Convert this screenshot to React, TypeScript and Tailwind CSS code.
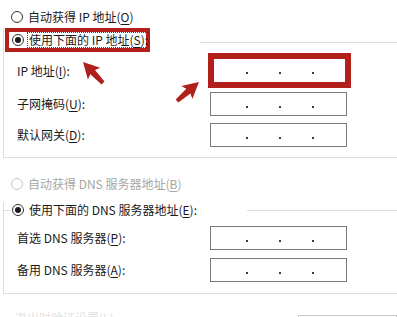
import type { ReactNode } from 'react';

function Radio({ checked, disabled }: { checked?: boolean; disabled?: boolean }) {
  return (
    <span
      className={`w-[12px] h-[12px] rounded-full border bg-white flex items-center justify-center shrink-0 ${
        disabled ? 'border-[#c4c4c4]' : 'border-[#333333]'
      }`}
    >
      {checked && <span className="w-[6px] h-[6px] rounded-full bg-[#1a1a1a]" />}
    </span>
  );
}

function Key({ children }: { children: ReactNode }) {
  return <u className="underline underline-offset-[2px] decoration-1">{children}</u>;
}

function Dots({ pad }: { pad: string }) {
  return (
    <div className={`flex items-center gap-[31px] pt-[5px] ${pad}`}>
      <span className="w-[2px] h-[2px] bg-[#3a3a3a]" />
      <span className="w-[2px] h-[2px] bg-[#3a3a3a]" />
      <span className="w-[2px] h-[2px] bg-[#3a3a3a]" />
    </div>
  );
}

function IpBox() {
  return (
    <div className="w-[137px] h-[24px] border border-[#7a7a7a] bg-white flex">
      <Dots pad="pl-[35px]" />
    </div>
  );
}

function Arrow({ x, y, angle }: { x: number; y: number; angle: number }) {
  // tail at (x, y), pointing along angle (deg)
  return (
    <polygon
      transform={`translate(${x} ${y}) rotate(${angle})`}
      points="0,-2 15,-3.2 13,-8.5 29,0 13,8.5 15,3.2 0,2"
      fill="#af1f1b"
    />
  );
}

export default function App() {
  return (
    <div className="relative w-[397px] h-[317px] overflow-hidden bg-white text-[12px] leading-none text-[#1a1a1a] font-['Noto_Sans_CJK_SC',sans-serif]">
      {/* 自动获得 IP */}
      <div className="flex items-center h-[13px] mt-[10px] pl-[11px]">
        <Radio />
        <span className="ml-[5px]">
          自动获得 IP 地址(<Key>O</Key>)
        </span>
      </div>

      {/* IP group */}
      <div className="mt-[19px] ml-[3px] border-l border-b border-[#dcdcdc] pb-[10px]">
        <div className="-mt-[14px] h-[24px] flex">
          <div className="ml-[1px] w-[145px] h-[24px] border-[4px] border-[#b3201b] bg-white flex items-center pl-[3px]">
            <Radio checked />
            <span className="ml-[3px] h-[16px] px-[1px] border border-dotted border-[#444] flex items-center whitespace-nowrap">
              使用下面的 IP 地址(<Key>S</Key>):
            </span>
          </div>
          <div className="ml-auto w-[197px] mt-[14px] border-t border-[#dcdcdc] self-start" />
        </div>

        <div className="mt-[1px] h-[35px] flex items-center">
          <div className="w-[204px] pl-[13px]">
            IP 地址(<Key>I</Key>):
          </div>
          <div className="w-[143px] h-[35px] border-[6px] border-[#b3201b] bg-white flex">
            <Dots pad="pl-[32px]" />
          </div>
        </div>

        <div className="mt-[4px] h-[24px] flex items-center">
          <div className="w-[206px] pl-[13px]">
            子网掩码(<Key>U</Key>):
          </div>
          <IpBox />
        </div>

        <div className="mt-[7px] h-[24px] flex items-center">
          <div className="w-[206px] pl-[13px]">
            默认网关(<Key>D</Key>):
          </div>
          <IpBox />
        </div>
      </div>

      {/* 自动获得 DNS (disabled) */}
      <div className="flex items-center h-[13px] mt-[19px] pl-[11px] text-[#a6a6a6]">
        <Radio disabled />
        <span className="ml-[5px]">
          自动获得 DNS 服务器地址(<Key>B</Key>)
        </span>
      </div>

      {/* DNS group */}
      <div className="mt-[20px] ml-[3px] border-l border-b border-[#dcdcdc] pb-[11px]">
        <div className="-mt-[8px] h-[16px] flex items-center">
          <div className="w-[7px] border-t border-[#dcdcdc]" />
          <span className="ml-[1px]">
            <Radio checked />
          </span>
          <span className="ml-[5px] whitespace-nowrap">
            使用下面的 DNS 服务器地址(<Key>E</Key>):
          </span>
          <div className="ml-auto w-[150px] border-t border-[#dcdcdc]" />
        </div>

        <div className="mt-[8px] h-[24px] flex items-center">
          <div className="w-[206px] pl-[13px]">
            首选 DNS 服务器(<Key>P</Key>):
          </div>
          <IpBox />
        </div>

        <div className="mt-[8px] h-[24px] flex items-center">
          <div className="w-[206px] pl-[13px]">
            备用 DNS 服务器(<Key>A</Key>):
          </div>
          <IpBox />
        </div>
      </div>

      {/* bottom row, cut off by the window edge */}
      <div className="mt-[18px] flex items-start">
        <span className="pl-[15px] text-[#e2e2e2] whitespace-nowrap">退出时验证设置(L)</span>
        <div className="ml-auto w-[99px] h-[22px] mt-[3px] border border-[#c8c8c8]" />
      </div>

      <svg className="absolute inset-0 pointer-events-none" width="397" height="317">
        <Arrow x={103} y={83} angle={-133.6} />
        <Arrow x={177} y={101} angle={-40.8} />
      </svg>
    </div>
  );
}
